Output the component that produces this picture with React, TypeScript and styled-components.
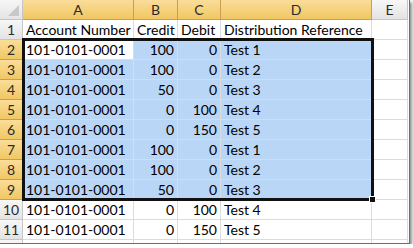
import React from 'react';
import styled, { createGlobalStyle, css } from 'styled-components';

const GlobalStyle = createGlobalStyle`
  html, body {
    margin: 0;
    padding: 0;
    background: #ffffff;
  }
  body {
    font-family: Lato, "Liberation Sans", sans-serif;
  }
`;

const COLS = [111, 44, 43, 151, 36];
const HEADERS = ['A', 'B', 'C', 'D', 'E'];

const rows = [
  ['Account Number', 'Credit', 'Debit', 'Distribution Reference'],
  ['101-0101-0001', '100', '0', 'Test 1'],
  ['101-0101-0001', '100', '0', 'Test 2'],
  ['101-0101-0001', '50', '0', 'Test 3'],
  ['101-0101-0001', '0', '100', 'Test 4'],
  ['101-0101-0001', '0', '150', 'Test 5'],
  ['101-0101-0001', '100', '0', 'Test 1'],
  ['101-0101-0001', '100', '0', 'Test 2'],
  ['101-0101-0001', '50', '0', 'Test 3'],
  ['101-0101-0001', '0', '100', 'Test 4'],
  ['101-0101-0001', '0', '150', 'Test 5'],
];

const Frame = styled.div`
  position: relative;
  width: 409px;
  height: 243px;
  overflow: hidden;
  border-right: 1px solid #6d6d6d;
  border-bottom: 1px solid #6d6d6d;
  box-shadow: 2px 2px 3px rgba(0, 0, 0, 0.45);
`;

const Sheet = styled.div`
  display: grid;
  grid-template-columns: 23px ${COLS.map((w) => `${w}px`).join(' ')};
  grid-auto-rows: 20px;
  font-size: 14px;
  color: #000;
`;

const Corner = styled.div`
  position: relative;
  background: linear-gradient(#f6f6f6, #e4e4e4);
  border-right: 1px solid #c5c5c5;
  border-bottom: 1px solid #c5c5c5;
  &::after {
    content: '';
    position: absolute;
    right: 3px;
    bottom: 3px;
    border-left: 11px solid transparent;
    border-bottom: 11px solid #c8c8c8;
  }
`;

const headerLook = (active: boolean) =>
  active
    ? css`
        background: linear-gradient(#f9dd9a, #f2c762);
        border-color: #c8a04d;
      `
    : css`
        background: linear-gradient(#f7f7f7, #e3e3e3);
        border-color: #c5c5c5;
      `;

const ColHead = styled.div<{ $active: boolean }>`
  display: flex;
  align-items: center;
  justify-content: center;
  border-right: 1px solid;
  border-bottom: 1px solid;
  color: #2b2b2b;
  ${({ $active }) => headerLook($active)}
`;

const RowHead = styled.div<{ $active: boolean }>`
  display: flex;
  align-items: center;
  justify-content: center;
  border-right: 1px solid;
  border-bottom: 1px solid;
  color: #2b2b2b;
  ${({ $active }) => headerLook($active)}
`;

const Cell = styled.div<{ $num?: boolean; $sel?: boolean }>`
  display: flex;
  align-items: center;
  justify-content: ${({ $num }) => ($num ? 'flex-end' : 'flex-start')};
  padding: 0 3px;
  white-space: nowrap;
  overflow: visible;
  border-right: 1px solid #dadcdd;
  border-bottom: 1px solid #dadcdd;
  background: ${({ $sel }) => ($sel ? '#bad6f7' : '#ffffff')};
`;

const Selection = styled.div`
  position: absolute;
  left: 22px;
  top: 38px;
  width: 346px;
  height: 157px;
  border: 3px solid #111;
  pointer-events: none;
`;

const FillHandle = styled.div`
  position: absolute;
  right: -5px;
  bottom: -5px;
  width: 5px;
  height: 5px;
  background: #111;
  border: 1px solid #fff;
`;

const isSelected = (r: number, c: number) => r >= 2 && r <= 9 && c <= 3;

export default function App() {
  const totalRows = 12;
  return (
    <>
      <GlobalStyle />
      <Frame>
        <Sheet>
          <Corner />
          {HEADERS.map((h, i) => (
            <ColHead key={h} $active={i < 4}>
              {h}
            </ColHead>
          ))}
          {Array.from({ length: totalRows }, (_, idx) => {
            const r = idx + 1;
            const data = rows[idx];
            return (
              <React.Fragment key={r}>
                <RowHead $active={r >= 2 && r <= 9}>{r <= 11 ? r : ''}</RowHead>
                {COLS.map((_, c) => {
                  const val = data && c < 4 ? data[c] : '';
                  const num = r > 1 && (c === 1 || c === 2);
                  const sel = isSelected(r, c) && !(r === 2 && c === 0);
                  return (
                    <Cell key={c} $num={num} $sel={sel}>
                      {val}
                    </Cell>
                  );
                })}
              </React.Fragment>
            );
          })}
        </Sheet>
        <Selection>
          <FillHandle />
        </Selection>
      </Frame>
    </>
  );
}
